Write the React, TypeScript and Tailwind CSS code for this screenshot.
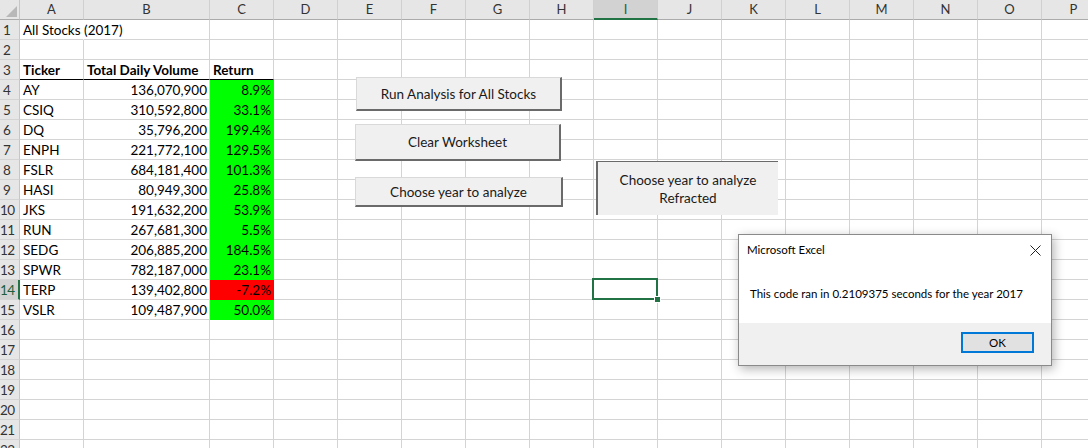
import React from "react";

const COLS = ["A", "B", "C", "D", "E", "F", "G", "H", "I", "J", "K", "L", "M", "N", "O", "P"];
const WIDTHS: Record<string, string> = {
  A: "w-[64px]",
  B: "w-[126px]",
};

const stocks = [
  ["AY", "136,070,900", "8.9%"],
  ["CSIQ", "310,592,800", "33.1%"],
  ["DQ", "35,796,200", "199.4%"],
  ["ENPH", "221,772,100", "129.5%"],
  ["FSLR", "684,181,400", "101.3%"],
  ["HASI", "80,949,300", "25.8%"],
  ["JKS", "191,632,200", "53.9%"],
  ["RUN", "267,681,300", "5.5%"],
  ["SEDG", "206,885,200", "184.5%"],
  ["SPWR", "782,187,000", "23.1%"],
  ["TERP", "139,402,800", "-7.2%"],
  ["VSLR", "109,487,900", "50.0%"],
];

type Cell = { text?: string; bold?: boolean; right?: boolean; fill?: string; noRight?: boolean; underline?: boolean };

function cellFor(row: number, col: string): Cell {
  if (row === 1 && col === "A") return { text: "All Stocks (2017)", noRight: true };
  if (row === 3) {
    if (col === "A") return { text: "Ticker", bold: true, underline: true };
    if (col === "B") return { text: "Total Daily Volume", bold: true, underline: true };
    if (col === "C") return { text: "Return", bold: true, underline: true };
  }
  if (row >= 4 && row <= 15) {
    const s = stocks[row - 4];
    if (col === "A") return { text: s[0] };
    if (col === "B") return { text: s[1], right: true };
    if (col === "C") return { text: s[2], right: true, fill: s[2].startsWith("-") ? "red" : "green" };
  }
  return {};
}

function GridCell({ row, col }: { row: number; col: string }) {
  const c = cellFor(row, col);
  const width = WIDTHS[col] ?? "w-[64px]";
  let border = "border-r border-b border-[#d4d4d4]";
  if (c.noRight) border = "border-r border-r-transparent border-b border-b-[#d4d4d4]";
  if (c.underline) border = "border-r border-r-[#d4d4d4] border-b border-b-black";
  if (c.fill === "green") border = "border-r border-b border-[#00ff00] bg-[#00ff00]";
  if (c.fill === "red") border = "border-r border-b border-[#ff0000] bg-[#ff0000]";
  return (
    <div
      className={`${width} ${border} h-[20px] shrink-0 flex pt-[2px] leading-[17px] whitespace-nowrap ${
        c.right ? "justify-end pr-[2px]" : "justify-start pl-[3px]"
      } ${c.bold ? "font-bold" : ""}`}
    >
      {c.text}
    </div>
  );
}

function SheetButton({ className, children, pressed }: { className: string; children: React.ReactNode; pressed?: boolean }) {
  return (
    <div
      className={`absolute flex flex-col items-center justify-center bg-[#f0f0f0] text-[13.5px] leading-[18px] text-[#1a1a1a] ${
        pressed
          ? "border-t border-l-2 border-[#6a6a6a]"
          : "border-t border-l border-t-[#d9d9d9] border-l-[#d9d9d9] border-r-2 border-b-2 border-r-[#6a6a6a] border-b-[#6a6a6a]"
      } ${className}`}
    >
      {children}
    </div>
  );
}

export default function App() {
  const rows = Array.from({ length: 22 }, (_, i) => i + 1);
  return (
    <div className="relative h-[448px] w-[1088px] overflow-hidden bg-white text-[13.5px] text-black font-['Lato',sans-serif]">
      {/* Column headers */}
      <div className="flex h-[20px]">
        <div className="relative w-[20px] shrink-0 bg-[#e6e6e6] border-r border-b border-r-[#c6c6c6] border-b-[#ababab]">
          <svg className="absolute left-[6px] top-[6px]" width="11" height="11" viewBox="0 0 11 11">
            <polygon points="11,0 11,11 0,11" fill="#b8b8b8" />
          </svg>
        </div>
        {COLS.map((c) => (
          <div
            key={c}
            className={`${WIDTHS[c] ?? "w-[64px]"} shrink-0 flex items-center justify-center text-[13px] leading-[19px] border-r border-r-[#d0d0d0] ${
              c === "I"
                ? "bg-[#d2d2d2] border-b-2 border-b-[#217346] text-[#1e5f3a]"
                : "bg-[#e6e6e6] border-b border-b-[#ababab] text-[#333]"
            }`}
          >
            {c}
          </div>
        ))}
      </div>

      {/* Rows */}
      {rows.map((r) => (
        <div key={r} className="flex h-[20px]">
          <div
            className={`w-[20px] shrink-0 h-[20px] pt-[2px] leading-[17px] border-b border-b-[#d4d4d4] ${
              r >= 10 ? "pl-0 tracking-[-0.5px]" : "pl-[3px]"
            } ${
              r === 14
                ? "bg-[#d2d2d2] border-r-2 border-r-[#217346] text-[#1e5f3a]"
                : "bg-[#e6e6e6] border-r border-r-[#c6c6c6] text-[#333]"
            }`}
          >
            {r}
          </div>
          {COLS.map((c) => (
            <GridCell key={c} row={r} col={c} />
          ))}
        </div>
      ))}

      {/* Form buttons */}
      <SheetButton className="left-[356px] top-[77px] w-[206px] h-[34px]">Run Analysis for All Stocks</SheetButton>
      <SheetButton className="left-[355px] top-[124px] w-[206px] h-[37px]">Clear Worksheet</SheetButton>
      <SheetButton className="left-[355px] top-[177px] w-[208px] h-[30px]">Choose year to analyze</SheetButton>
      <SheetButton pressed className="left-[596px] top-[161px] w-[182px] h-[54px]">
        <span>Choose year to analyze</span>
        <span>Refracted</span>
      </SheetButton>

      {/* Active cell I14 */}
      <div className="absolute left-[592px] top-[278px] w-[66px] h-[22px] border-2 border-[#217346]" />
      <div className="absolute left-[654px] top-[296px] w-[7px] h-[7px] bg-[#217346] border border-white" />

      {/* Message box */}
      <div className="absolute left-[738px] top-[234px] w-[314px] h-[132px] flex flex-col bg-white border border-[#8a8a8a] shadow-[2px_3px_10px_rgba(0,0,0,0.3)] text-[11.5px] text-black">
        <div className="flex items-center justify-between h-[30px] pl-[8px] pr-[10px]">
          <span>Microsoft Excel</span>
          <svg width="11" height="11" viewBox="0 0 11 11" stroke="#222" strokeWidth="1">
            <path d="M0.5 0.5 L10.5 10.5 M10.5 0.5 L0.5 10.5" />
          </svg>
        </div>
        <div className="flex-1 flex items-center pl-[11px]">
          This code ran in 0.2109375 seconds for the year 2017
        </div>
        <div className="h-[42px] bg-[#f0f0f0] flex items-start justify-end pt-[9px] pr-[17px]">
          <div className="w-[73px] h-[21px] border-2 border-[#0078d7] bg-[#e1e1e1] flex items-center justify-center">
            OK
          </div>
        </div>
      </div>
    </div>
  );
}
